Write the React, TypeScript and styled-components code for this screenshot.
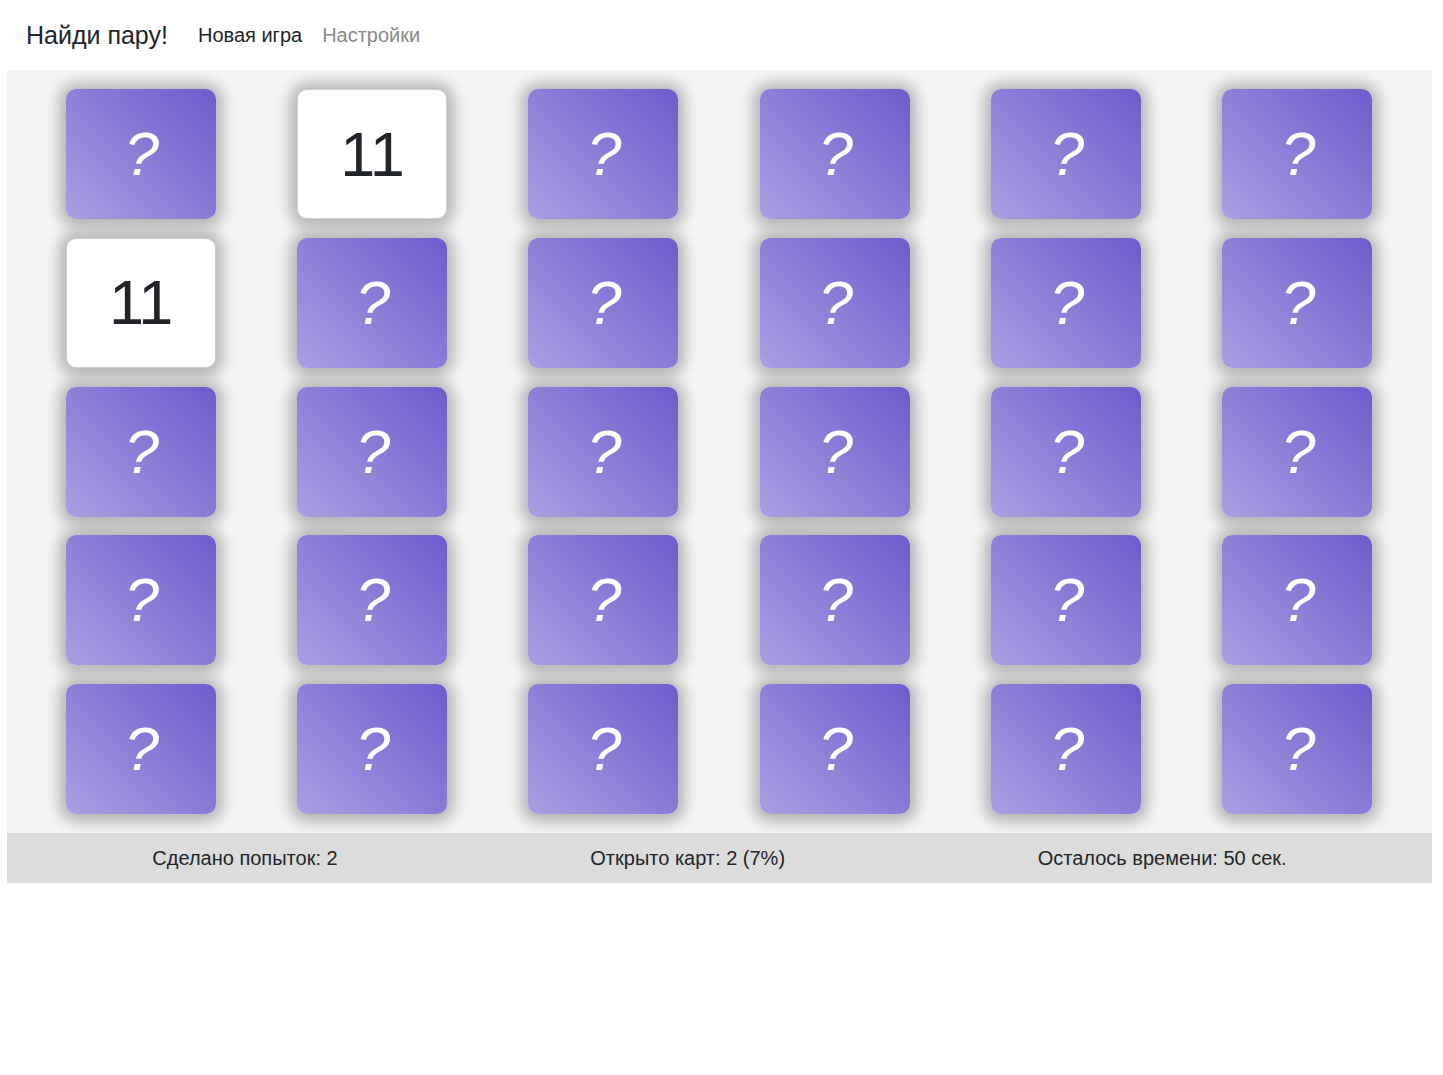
import React from "react";
import styled, { createGlobalStyle } from "styled-components";

const GlobalStyle = createGlobalStyle`
  html, body {
    margin: 0;
    padding: 0;
    background: #ffffff;
  }
  body {
    font-family: "Liberation Sans", Arial, sans-serif;
    color: #212529;
  }
`;

const Page = styled.div`
  width: 1425px;
  margin-left: 7px;
`;

const Header = styled.header`
  height: 70px;
  display: flex;
  align-items: center;
  padding: 0 19px;
`;

const Title = styled.h1`
  margin: 0 30px 0 0;
  font-size: 25px;
  font-weight: 400;
  color: #212529;
`;

const Nav = styled.nav`
  display: flex;
  gap: 20px;
`;

const NavLink = styled.a<{ $muted?: boolean }>`
  font-size: 20px;
  color: ${(p) => (p.$muted ? "#8a8a8a" : "#212529")};
  text-decoration: none;
  cursor: pointer;
`;

const Board = styled.main`
  background: #f4f4f4;
  padding: 19px 19px 19px 18px;
  display: grid;
  grid-template-columns: repeat(6, 1fr);
  row-gap: 18.75px;
`;

const Card = styled.div<{ $open?: boolean }>`
  justify-self: center;
  width: 150px;
  height: 130px;
  box-sizing: border-box;
  border-radius: 10px;
  display: flex;
  align-items: center;
  justify-content: center;
  box-shadow: 0 1px 14px 7px rgba(0, 0, 0, 0.26);
  background: ${(p) =>
    p.$open ? "#ffffff" : "linear-gradient(45deg, #a99fe2 0%, #6c5ccd 100%)"};
  border: ${(p) => (p.$open ? "1px solid #cfcfcf" : "none")};
`;

const Mark = styled.span`
  font-size: 62px;
  font-style: italic;
  color: #ffffff;
  line-height: 1;
  margin-left: 2px;
`;

const Value = styled.span`
  font-size: 63px;
  color: #212529;
  line-height: 1;
  letter-spacing: -1px;
`;

const Footer = styled.footer`
  height: 50px;
  background: #dcdcdc;
  display: flex;
  align-items: center;
  padding: 0 19px;
`;

const Stat = styled.div`
  flex: 1 1 auto;
  text-align: center;
  font-size: 20px;
  color: #212529;
`;

const openCards: Record<number, string> = { 1: "11", 6: "11" };

export default function App() {
  const cards = Array.from({ length: 30 }, (_, i) => i);
  return (
    <Page>
      <GlobalStyle />
      <Header>
        <Title>Найди пару!</Title>
        <Nav>
          <NavLink>Новая игра</NavLink>
          <NavLink $muted>Настройки</NavLink>
        </Nav>
      </Header>
      <Board>
        {cards.map((i) =>
          openCards[i] ? (
            <Card key={i} $open>
              <Value>{openCards[i]}</Value>
            </Card>
          ) : (
            <Card key={i}>
              <Mark>?</Mark>
            </Card>
          )
        )}
      </Board>
      <Footer>
        <Stat>Сделано попыток: 2</Stat>
        <Stat>Открыто карт: 2 (7%)</Stat>
        <Stat>Осталось времени: 50 сек.</Stat>
      </Footer>
    </Page>
  );
}
